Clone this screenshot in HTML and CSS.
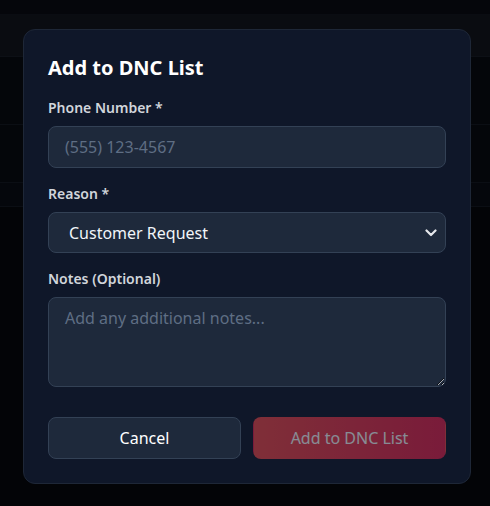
FILE: index.html
```html
<!DOCTYPE html>
<html lang="en">
<head>
<meta charset="utf-8">
<title>Add to DNC List</title>
<link rel="stylesheet" href="styles.css">
</head>
<body>
  <div class="page">
    <div class="topbar"></div>
    <div class="thead"></div>
    <div class="row r1"></div>
    <div class="row r2"></div>
    <div class="row r3"></div>
  </div>
  <div class="overlay">
    <form class="modal">
      <h2 class="title">Add to DNC List</h2>
      <div class="field">
        <label class="label" for="phone">Phone Number *</label>
        <input class="control" id="phone" type="text" placeholder="(555) 123-4567">
      </div>
      <div class="field">
        <label class="label" for="reason">Reason *</label>
        <div class="select-wrap">
          <select class="control select" id="reason">
            <option>Customer Request</option>
            <option>Legal Requirement</option>
            <option>Other</option>
          </select>
          <svg class="chevron" width="12" height="8" viewBox="0 0 12 8"><path d="M1.5 1.5 L6 6 L10.5 1.5" fill="none" stroke="#e5e7eb" stroke-width="2.2" stroke-linecap="round" stroke-linejoin="round"/></svg>
        </div>
      </div>
      <div class="field field-notes">
        <label class="label" for="notes">Notes (Optional)</label>
        <textarea class="control textarea" id="notes" rows="3" placeholder="Add any additional notes..."></textarea>
      </div>
      <div class="actions">
        <button type="button" class="btn btn-cancel">Cancel</button>
        <button type="button" class="btn btn-add" disabled>Add to DNC List</button>
      </div>
    </form>
  </div>
</body>
</html>
```
FILE: styles.css
```css
* { box-sizing: border-box; }
html, body { margin: 0; padding: 0; }
body {
  background: #030407;
  font-family: "Noto Sans", "Open Sans", sans-serif;
  color: #fff;
  color-scheme: dark;
  min-height: 506px;
}
.page { width: 100%; }
.topbar { height: 15px; background: #05060b; border-bottom: 1px solid #0a0c12; }
.thead { height: 42px; background: #0a0c11; border-bottom: 1px solid #0d1016; }
.row { background: #04060a; border-bottom: 1px solid #0b0e14; }
.r1 { height: 68px; }
.r2 { height: 58px; }
.r3 { height: 24px; background: #05070c; }

.overlay {
  position: fixed;
  inset: 0;
  display: flex;
  align-items: flex-start;
  justify-content: center;
  padding: 29px 0 0 4px;
}
.modal {
  width: 448px;
  background: #0f1729;
  border: 1px solid #1e2737;
  border-radius: 12px;
  padding: 24px;
  margin: 0;
}
.title {
  margin: 0 0 16px;
  font-size: 20px;
  line-height: 28px;
  font-weight: 700;
  color: #ffffff;
}
.field { margin-bottom: 16px; }
.field-notes { margin-bottom: 30px; }
.label {
  display: block;
  font-size: 14px;
  line-height: 20px;
  font-weight: 600;
  color: #d1d5db;
  margin-bottom: 8px;
}
.control {
  display: block;
  width: 100%;
  background: #1e293b;
  border: 1px solid #334155;
  border-radius: 8px;
  padding: 8px 16px;
  font-family: inherit;
  font-size: 16px;
  line-height: 24px;
  color: #f1f5f9;
  outline: none;
  margin: 0;
}
.control::placeholder { color: #5f6e84; }
.select-wrap { position: relative; }
.select {
  appearance: none;
  -webkit-appearance: none;
  padding: 0 16px 0 20px;
  height: 41px;
}
.chevron {
  position: absolute;
  right: 9px;
  top: 17px;
  pointer-events: none;
}
.textarea { resize: vertical; height: 90px; }
.actions { display: flex; gap: 12px; }
.btn {
  flex: 1;
  font-family: inherit;
  font-size: 16px;
  line-height: 24px;
  font-weight: 400;
  padding: 8px 16px;
  border-radius: 8px;
  border: 1px solid transparent;
  color: #ffffff;
  margin: 0;
}
.btn-cancel { background: #1e293b; border-color: #334155; }
.btn-add {
  background: linear-gradient(to right, #ef4747, #e3204b);
  opacity: 0.5;
}
```
